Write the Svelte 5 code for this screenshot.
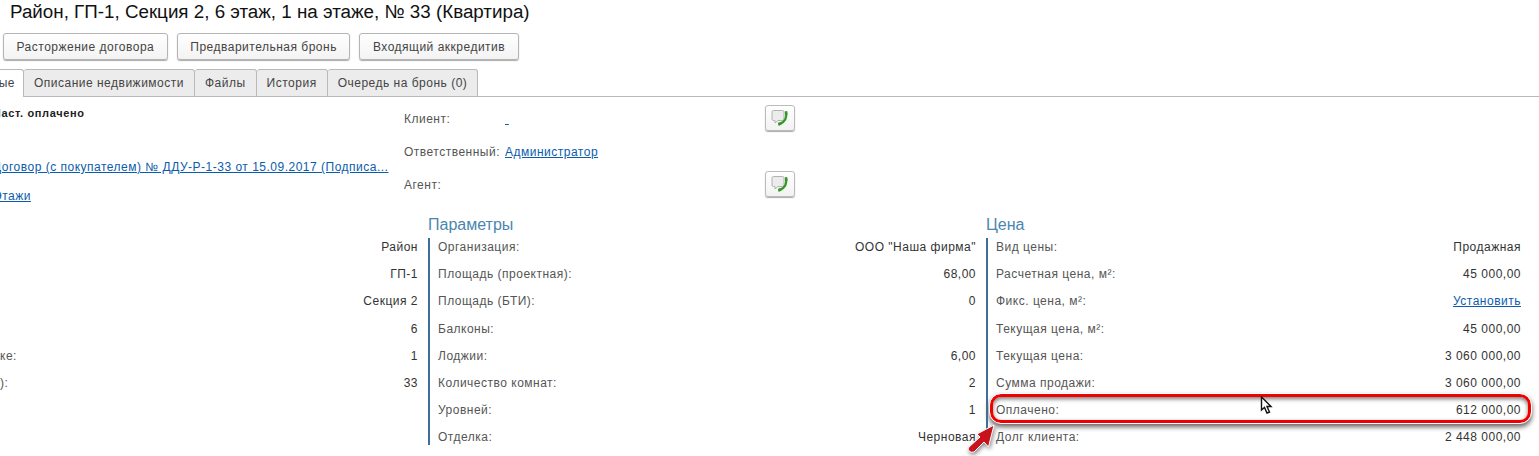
<script lang="ts">
	const actions = ['Расторжение договора', 'Предварительная бронь', 'Входящий аккредитив'];
	const tabs = ['Описание недвижимости', 'Файлы', 'История', 'Очередь на бронь (0)'];

	const place = [
		{ label: '', value: 'Район' },
		{ label: '', value: 'ГП-1' },
		{ label: '', value: 'Секция 2' },
		{ label: '', value: '6' },
		{ label: 'ке:', value: '1' },
		{ label: '):', value: '33' }
	];

	const params = [
		{ label: 'Организация:', value: 'ООО "Наша фирма"' },
		{ label: 'Площадь (проектная):', value: '68,00' },
		{ label: 'Площадь (БТИ):', value: '0' },
		{ label: 'Балконы:', value: '' },
		{ label: 'Лоджии:', value: '6,00' },
		{ label: 'Количество комнат:', value: '2' },
		{ label: 'Уровней:', value: '1' },
		{ label: 'Отделка:', value: 'Черновая' }
	];

	const price = [
		{ label: 'Вид цены:', value: 'Продажная' },
		{ label: 'Расчетная цена, м²:', value: '45 000,00' },
		{ label: 'Фикс. цена, м²:', value: 'Установить', link: true },
		{ label: 'Текущая цена, м²:', value: '45 000,00' },
		{ label: 'Текущая цена:', value: '3 060 000,00' },
		{ label: 'Сумма продажи:', value: '3 060 000,00' },
		{ label: 'Оплачено:', value: '612 000,00' },
		{ label: 'Долг клиента:', value: '2 448 000,00' }
	];
</script>

{#snippet callIcon()}
	<button class="call" aria-label="Позвонить">
		<svg width="20" height="18" viewBox="0 0 20 18">
			<path d="M3.500 1.500h9q1.500 0 1.500 1.500v7q0 1.500-1.500 1.500H8L5 14v-2.500H3.500Q2 11.500 2 10V3q0-1.500 1.500-1.500z" fill="#ececec" stroke="#b2b2b2" />
			<path d="M16 3.500Q17.800 11.500 9.500 15.300" fill="none" stroke="#2f9a1f" stroke-width="2.200" stroke-linecap="round" />
			<path d="M14.800 2.500l2.300-.5.700 3.500-2.500.5zM8 13.800l2.500-.8 1 2.500-3 1.200z" fill="#2f9a1f" />
		</svg>
	</button>
{/snippet}

<div class="sheet">
	<h1>Район, ГП-1, Секция 2, 6 этаж, 1 на этаже, № 33 (Квартира)</h1>

	<div class="actions">
		{#each actions as action}
			<button class="action">{action}</button>
		{/each}
	</div>

	<div class="tabs">
		<div class="tab active">Основные</div>
		{#each tabs as tab}
			<div class="tab">{tab}</div>
		{/each}
	</div>

	<div class="top">
		<div class="docs">
			<div class="status">Част. оплачено</div>
			<a class="contract" href="#doc">Договор (с покупателем) № ДДУ-Р-1-33 от 15.09.2017 (Подписа...</a>
			<a class="floors" href="#floors">Этажи</a>
		</div>
		<div class="people">
			<div class="person">
				<span class="who">Клиент:</span>
				<a class="name" href="#client">&nbsp;</a>
				{@render callIcon()}
			</div>
			<div class="person">
				<span class="who">Ответственный:</span>
				<a class="name" href="#admin">Администратор</a>
			</div>
			<div class="person">
				<span class="who">Агент:</span>
				<span class="name"></span>
				{@render callIcon()}
			</div>
		</div>
	</div>

	<div class="groups">
		<section class="group first">
			<div class="rows">
				{#each place as row}
					<div class="row"><span>{row.label}</span><span>{row.value}</span></div>
				{/each}
			</div>
		</section>
		<section class="group second">
			<h2>Параметры</h2>
			<div class="rows ruled">
				{#each params as row}
					<div class="row"><span>{row.label}</span><span>{row.value}</span></div>
				{/each}
			</div>
		</section>
		<section class="group third">
			<h2>Цена</h2>
			<div class="rows ruled">
				{#each price as row}
					<div class="row">
						<span>{row.label}</span>
						{#if row.link}
							<a href="#set">{row.value}</a>
						{:else}
							<span>{row.value}</span>
						{/if}
					</div>
				{/each}
			</div>
		</section>
	</div>

	<div class="highlight"></div>
	<svg class="arrow" width="36" height="34" viewBox="0 0 36 34">
		<path d="M28 3 L22.500 25 L18 20 L8 30 Q5 31 3 29 Q1 27 3 25 L14 15 L11 12 Z" fill="#c8131c" stroke="#fff" stroke-width="1" />
	</svg>
	<svg class="cursor" width="14" height="19" viewBox="0 0 14 19">
		<path d="M1.500 1v13l3-2.500 2.500 5.500 2.500-1-2.500-5.500h4z" fill="#fff" stroke="#111" stroke-width="1.400" />
	</svg>
</div>

<style>
	:global(body) {
		background: #fff;
	}

	.sheet {
		position: relative;
		width: 1539px;
		height: 456px;
		overflow: hidden;
		background: #fff;
		color: #333;
		font-family: 'Liberation Sans', Arial, sans-serif;
		font-size: 12px;
		letter-spacing: 0.5px;
	}

	h1 {
		margin: 0;
		padding: 1px 0 0 10px;
		height: 32px;
		box-sizing: border-box;
		font-size: 18.800px;
		line-height: 22px;
		font-weight: 400;
		letter-spacing: 0;
		color: #111;
	}

	.actions {
		display: flex;
		gap: 9px;
		padding-left: 3px;
		height: 37px;
	}

	.action {
		height: 27px;
		margin-top: 1px;
		padding: 0 12.500px;
		border: 1px solid #b4b4b4;
		border-radius: 3px;
		background: linear-gradient(#fff, #f3f3f3);
		box-shadow: 0 1px 1px #aaa;
		font: inherit;
		letter-spacing: inherit;
		color: #444;
	}

	.tabs {
		display: flex;
		height: 27px;
		margin-left: -56px;
		border-bottom: 1px solid #b9b9b9;
	}

	.tab {
		height: 28px;
		box-sizing: border-box;
		padding: 6px 10px 0;
		background: #ececec;
		border: 1px solid #b9b9b9;
		border-left: 0;
		border-radius: 3px 3px 0 0;
		color: #444;
	}

	.tab.active {
		padding-right: 8px;
		background: #fff;
		border-bottom: 0;
	}

	.top {
		display: flex;
		height: 118px;
		margin-left: -7px;
	}

	.docs {
		display: flex;
		flex-direction: column;
		align-items: flex-start;
		width: 411px;
		flex: none;
	}

	.status {
		margin-top: 10px;
		font-size: 11px;
		font-weight: 700;
		letter-spacing: 0.650px;
		color: #222;
	}

	.contract {
		margin-top: 41px;
	}

	.floors {
		margin-top: 15px;
	}

	a {
		color: #0b5cad;
		text-decoration: underline;
	}

	.people {
		display: flex;
		flex-direction: column;
		padding-top: 8px;
		gap: 7px;
	}

	.person {
		display: flex;
		align-items: center;
		height: 26px;
	}

	.who {
		width: 101px;
		padding-top: 1px;
		color: #555;
	}

	.name {
		width: 260px;
		padding-top: 1px;
	}

	.call {
		display: flex;
		align-items: center;
		justify-content: center;
		width: 30px;
		height: 26px;
		padding: 0;
		border: 1px solid #bbb;
		border-radius: 3px;
		background: linear-gradient(#fff, #f2f2f2);
		box-shadow: 0 1px 1px #aaa;
	}

	.groups {
		display: flex;
		margin-left: -30px;
	}

	.group h2 {
		margin: 0;
		height: 23px;
		font-size: 16px;
		line-height: 19px;
		font-weight: 400;
		letter-spacing: 0;
		color: #4b86ae;
	}

	.first {
		width: 458px;
		padding: 23px 10px 0 30px;
		box-sizing: border-box;
		flex: none;
	}

	.second {
		width: 558px;
		padding-right: 10px;
		box-sizing: border-box;
		flex: none;
	}

	.third {
		width: 535px;
		flex: none;
	}

	.rows.ruled {
		border-left: 2px solid #3e6f9a;
		padding-left: 8px;
		height: 207px;
		box-sizing: border-box;
	}

	.row {
		display: flex;
		justify-content: space-between;
		height: 27.2px;
		line-height: 18px;
		color: #555;
	}

	.row span:last-child {
		color: #333;
	}

	.highlight {
		position: absolute;
		left: 990px;
		top: 394px;
		width: 541px;
		height: 29px;
		box-sizing: border-box;
		border: 3px solid #f00000;
		border-radius: 11px;
		outline: 1px solid #fff;
		box-shadow:
			0 3px 5px 1px #666,
			inset 0 2px 4px #777;
	}

	.arrow {
		position: absolute;
		left: 966px;
		top: 422px;
		filter: drop-shadow(1px 2px 2px #888);
	}

	.cursor {
		position: absolute;
		left: 1260px;
		top: 396px;
	}
</style>
